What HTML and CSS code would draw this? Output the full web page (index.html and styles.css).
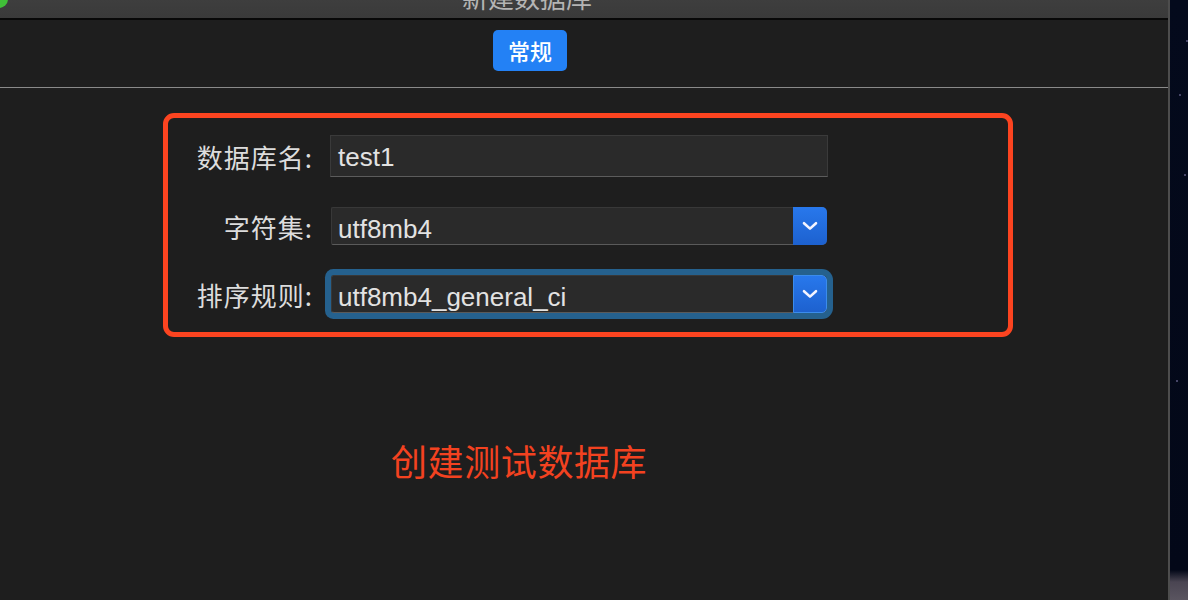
FILE: index.html
```html
<!DOCTYPE html>
<html lang="zh-CN">
<head>
<meta charset="utf-8">
<title>新建数据库</title>
<link rel="stylesheet" href="styles.css">
</head>
<body>
<div class="screen">
  <div class="window">
    <div class="titlebar">
      <span class="light"></span>
      <span class="title">新建数据库</span>
    </div>
    <div class="toolbar">
      <button class="tab">常规</button>
    </div>
    <div class="content">
      <div class="form-box">
        <div class="form-grid">
          <label class="label">数据库名:</label>
          <div class="input">test1</div>

          <label class="label">字符集:</label>
          <div class="select">
            <span class="select-value">utf8mb4</span>
            <span class="select-btn">
              <svg width="16" height="10" viewBox="0 0 16 10"><path d="M2 2.2 L8 7.6 L14 2.2" fill="none" stroke="#f4f4ff" stroke-width="2.6" stroke-linecap="round" stroke-linejoin="round"/></svg>
            </span>
          </div>

          <label class="label">排序规则:</label>
          <div class="select focused">
            <span class="select-value">utf8mb4_general_ci</span>
            <span class="select-btn">
              <svg width="16" height="10" viewBox="0 0 16 10"><path d="M2 2.2 L8 7.6 L14 2.2" fill="none" stroke="#f4f4ff" stroke-width="2.6" stroke-linecap="round" stroke-linejoin="round"/></svg>
            </span>
          </div>
        </div>
      </div>
      <p class="note">创建测试数据库</p>
    </div>
  </div>
  <div class="desktop">
    <span class="star s1"></span>
    <span class="star s2"></span>
    <span class="star s3"></span>
    <span class="star s4"></span>
  </div>
</div>
</body>
</html>
```

FILE: styles.css
```css
* { box-sizing: border-box; }

html, body {
  margin: 0;
  padding: 0;
  width: 1188px;
  height: 600px;
  overflow: hidden;
  background: #1e1e1e;
  font-family: "Liberation Sans", "Noto Sans CJK SC", sans-serif;
}

.screen {
  display: flex;
  width: 1188px;
  height: 600px;
}

.window {
  width: 1170px;
  height: 600px;
  display: flex;
  flex-direction: column;
  background: #1e1e1e;
  border-right: 2px solid #4d4d4d;
}

.titlebar {
  position: relative;
  height: 20px;
  flex: none;
  background: linear-gradient(#3e3e3e, #3a3a3a);
  border-bottom: 2px solid #080808;
  overflow: hidden;
  display: flex;
  align-items: flex-end;
  padding-left: 462px;
}

.light {
  position: absolute;
  left: -10px;
  top: -10px;
  width: 18px;
  height: 18px;
  border-radius: 50%;
  background: #40bf38;
}

.title {
  font-family: "Noto Sans CJK SC", sans-serif;
  font-size: 26px;
  line-height: 26px;
  color: #b4b4b4;
  margin-bottom: 8px;
}

.toolbar {
  height: 68px;
  flex: none;
  border-bottom: 1px solid #8a8a8a;
  padding: 10px 0 0 493px;
}

.tab {
  display: flex;
  align-items: center;
  justify-content: center;
  width: 74px;
  height: 41px;
  margin: 0;
  padding: 0 0 1px;
  border: none;
  border-radius: 5px;
  background: #2381f5;
  color: #ffffff;
  font-family: "Noto Sans CJK SC", sans-serif;
  font-size: 22px;
  font-weight: 500;
  line-height: 1;
}

.content {
  flex: 1;
  padding: 25px 0 0 163px;
}

.form-box {
  width: 850px;
  height: 224px;
  border: 5px solid #fc4420;
  border-radius: 11px;
  padding-top: 17px;
}

.form-grid {
  display: grid;
  grid-template-columns: 146px 498px;
  grid-template-rows: 42px 38px 38px;
  column-gap: 16px;
  row-gap: 30px;
}

.label {
  align-self: center;
  justify-self: end;
  font-family: "Noto Sans CJK SC", sans-serif;
  font-size: 26px;
  line-height: 30px;
  letter-spacing: 1px;
  color: #dcdcdc;
  margin-right: 1px;
  padding-top: 2px;
}

.input {
  height: 42px;
  background: #2a2a2a;
  border: 1px solid #3a3a3a;
  border-bottom-color: #5c5c5c;
  padding: 2px 0 0 7px;
  display: flex;
  align-items: center;
  font-size: 26px;
  color: #e2e2e2;
}

.select {
  width: 496px;
  height: 38px;
  margin-left: 1px;
  display: flex;
  background: #2a2a2a;
  border-top: 1px solid #383838;
  border-left: 1px solid #383838;
  border-bottom: 1px solid #5a5a5a;
  border-radius: 2px 5px 5px 2px;
}

.select-value {
  flex: 1;
  display: flex;
  align-items: center;
  padding: 6px 0 0 6px;
  font-size: 26px;
  color: #e2e2e2;
}

.select-btn {
  width: 34px;
  margin: -1px 0 -1px 0;
  display: flex;
  align-items: center;
  justify-content: center;
  background: linear-gradient(#2878ec, #1d61cf);
  border-radius: 0 5px 5px 0;
}

.select.focused {
  box-shadow: 0 0 0 6px #25618e;
  border-radius: 3px 5px 5px 3px;
}

.select.focused .select-btn {
  border: 1px solid #3b8cec;
}

.note {
  margin: 105px 0 0 228px;
  font-family: "Noto Sans CJK SC", sans-serif;
  font-size: 36px;
  line-height: 36px;
  letter-spacing: 0.6px;
  color: #f34220;
}

.desktop {
  position: relative;
  flex: 1;
  height: 600px;
  background: linear-gradient(#040a1c 0, #030818 95%, #4a4552 97%, #5a5560 100%);
}

.star {
  position: absolute;
  width: 2px;
  height: 2px;
  border-radius: 50%;
  background: #5c5a80;
}
.s1 { left: 16px; top: 40px; }
.s2 { left: 9px; top: 94px; }
.s3 { left: 14px; top: 174px; }
.s4 { left: 6px; top: 380px; }
```
